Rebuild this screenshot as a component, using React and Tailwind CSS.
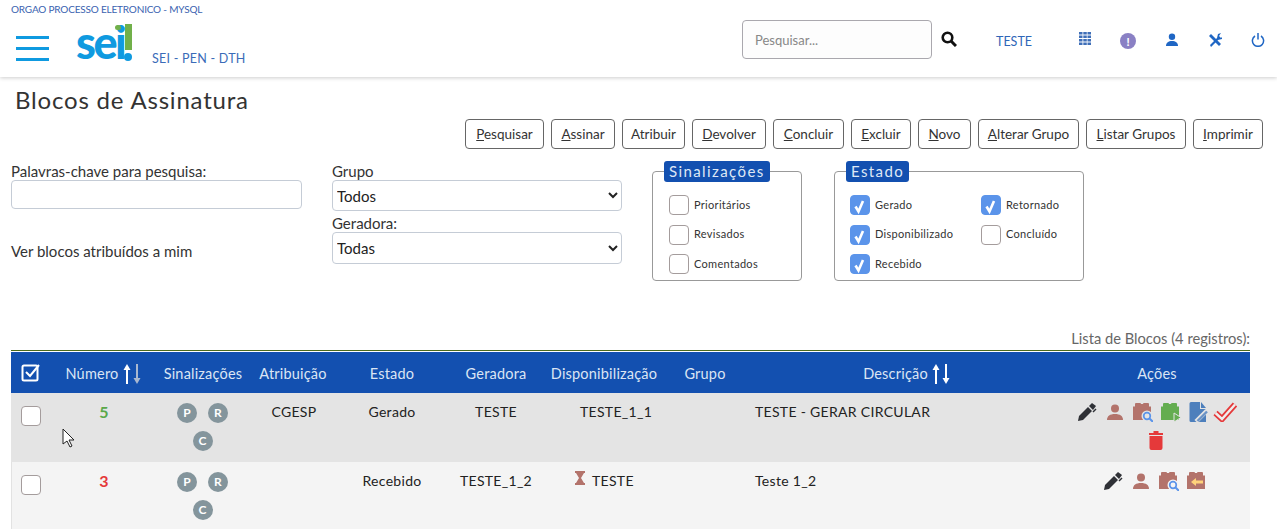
import React from 'react';

const buttons = [
  { label: 'Pesquisar', key: 'P', w: 'w-[79px]' },
  { label: 'Assinar', key: 'A', w: 'w-[64px]' },
  { label: 'Atribuir', key: '', w: 'w-[63px]' },
  { label: 'Devolver', key: 'D', w: 'w-[74px]' },
  { label: 'Concluir', key: 'C', w: 'w-[71px]' },
  { label: 'Excluir', key: 'E', w: 'w-[60px]' },
  { label: 'Novo', key: 'N', w: 'w-[53px]' },
  { label: 'Alterar Grupo', key: 'A', w: 'w-[101px]' },
  { label: 'Listar Grupos', key: 'L', w: 'w-[100px]' },
  { label: 'Imprimir', key: 'I', w: 'w-[70px]' },
];

const grid = 'grid grid-cols-[41px_103px_96px_82px_116px_92px_124px_78px_322px_184px]';

function Check({ on }) {
  return (
    <span className={`flex h-5 w-5 shrink-0 items-center justify-center rounded-[4px] border ${on ? 'border-[#5b94ea] bg-[#5b94ea]' : 'border-[#a49c9c] bg-white'}`}>
      {on && (
        <svg viewBox="0 0 20 20" className="h-5 w-5 shrink-0">
          <path d="M5.5 11.5l3 5 4.5-10.5" fill="none" stroke="#fff" strokeWidth="2.6" />
        </svg>
      )}
    </span>
  );
}

function Opt({ on, label }) {
  return (
    <label className="flex items-center gap-[5px] text-[11px] tracking-[0.3px] text-[#333]">
      <Check on={on} />
      {label}
    </label>
  );
}

function Legend({ children }) {
  return (
    <legend className="ml-[11px] rounded-[3px] bg-[#1350b0] px-[5px] text-[15px] leading-[21px] tracking-[1.4px] text-[#dfe8f6]">
      {children}
    </legend>
  );
}

function Badge({ children }) {
  return (
    <span className="flex h-5 w-5 items-center justify-center rounded-full bg-[#84959c] text-[12px] font-bold text-white">
      {children}
    </span>
  );
}

function Badges() {
  return (
    <div className="pr-[1px]">
      <div className="mx-auto flex w-[60px] flex-wrap justify-center gap-x-[11px] gap-y-2 pt-[10px]">
        <Badge>P</Badge>
        <Badge>R</Badge>
        <Badge>C</Badge>
      </div>
    </div>
  );
}

function SortArrows({ dim }) {
  const down = dim ? '#a9b8d0' : '#fff';
  return (
    <svg viewBox="0 0 20 20" className="ml-[3px] h-5 w-5">
      <path d="M5 20V4" stroke="#fff" strokeWidth="2" />
      <path d="M1.5 6L5 0l3.5 6z" fill="#fff" />
      <path d="M15 0v16" stroke={down} strokeWidth="2" />
      <path d="M11.5 14l3.5 6 3.5-6z" fill={down} />
    </svg>
  );
}

function Pen() {
  return (
    <svg viewBox="0 0 20 20" className="h-5 w-5">
      <path d="M1 19l1-5L11 5l4 4-9 9z" fill="#2f3136" />
      <path d="M12 4l3-3 4 3-3 4z" fill="#2f3136" />
      <path d="M16 10l3-3" stroke="#2f3136" strokeWidth="1.4" />
    </svg>
  );
}

function Person() {
  return (
    <svg viewBox="0 0 20 20" className="h-5 w-5">
      <circle cx="10" cy="6.5" r="4" fill="#b3736b" />
      <path d="M2 18c0-4 3-6 8-6s8 2 8 6z" fill="#b3736b" />
    </svg>
  );
}

function Blocks({ color = '#b3736b', children }) {
  return (
    <svg viewBox="0 0 20 20" className="h-5 w-5">
      <path d="M0 4.5h2V2q0-1 1-1h4q1 0 1 1h2q0-1 1-1h4q1 0 1 1v2.500h2V18H0z" fill={color} />
      {children}
    </svg>
  );
}

function BlocksSearch({ bg }) {
  return (
    <Blocks>
      <circle cx="14" cy="14" r="5.5" fill={bg} />
      <circle cx="14" cy="14" r="3.3" fill="none" stroke="#5b94ea" strokeWidth="1.7" />
      <path d="M16.500 16.500l3.500 3.500" stroke="#5b94ea" strokeWidth="2" />
    </Blocks>
  );
}

function DocPen() {
  return (
    <svg viewBox="0 0 20 20" className="h-5 w-5">
      <path d="M2 0h9v7h6v13H2q-1.500 0-1.500-1.500v-17Q.5 0 2 0z" fill="#4d7fbc" />
      <path d="M12 0l5 6h-5z" fill="#4d7fbc" />
      <path d="M7 19.500l11-11" stroke="#e4e4e4" strokeWidth="4.500" />
      <path d="M8.500 19l9.500-9.500" stroke="#6b93c6" strokeWidth="2.400" />
    </svg>
  );
}

function Icon({ children, className = 'w-5' }) {
  return <span className={`flex h-5 items-center justify-center ${className}`}>{children}</span>;
}

function Row({ tone, num, numColor, atrib, estado, geradora, disp, dispPad, desc, actions, hourglass, h }) {
  return (
    <div className={`${grid} ${h} ${tone} text-[14px] tracking-[0.3px] text-[#222]`}>
      <div className="pl-[10px] pt-[13px]">
        <Check />
      </div>
      <div className={`pl-[1px] pt-[7px] text-center text-[16px] font-bold ${numColor}`}>{num}</div>
      <Badges />
      <div className="pl-1 pt-2 text-center">{atrib}</div>
      <div className="pl-[2px] pt-2 text-center">{estado}</div>
      <div className="pl-[2px] pt-2 text-center">{geradora}</div>
      <div className={`flex items-start gap-[7px] pt-2 ${dispPad}`}>
        {hourglass && (
          <svg viewBox="0 0 10 14" className="mt-[1px] h-[14px] w-[10px]">
            <path d="M0 0h10v2H9L6 7l3 5h1v2H0v-2h1l3-5-3-5H0z" fill="#b3736b" />
          </svg>
        )}
        {disp}
      </div>
      <div />
      <div className="pl-3 pt-2">{desc}</div>
      <div className="flex flex-wrap content-start justify-center gap-x-2 gap-y-2 px-[6px] pt-[9px]">{actions}</div>
    </div>
  );
}

export default function App() {
  return (
    <div className="relative h-[529px] overflow-hidden bg-white font-['Lato',sans-serif] text-[#222]">
      <header className="relative h-[77px] bg-white shadow-[0_1px_4px_rgba(0,0,0,0.2)]">
        <div className="pl-[11px] pt-[2px] text-[10px] leading-[14px] tracking-[-0.18px] text-[#3a62b0]">ORGAO PROCESSO ELETRONICO - MYSQL</div>
        <div className="flex items-start">
          <div className="ml-[16px] mt-[20px] flex h-[25px] w-[33px] flex-col justify-between">
            <span className="h-[3px] bg-[#0f9ae0]" />
            <span className="h-[3px] bg-[#0f9ae0]" />
            <span className="h-[3px] bg-[#0f9ae0]" />
          </div>
          <div className="relative ml-[27px] mt-[8px] flex h-[37px] w-[56px] items-end">
            <span className="text-[45px] font-black leading-[37px] tracking-[-2.5px] text-[#0f9ae0]">sei</span>
            <span className="absolute left-[39px] top-[1px] h-[5px] w-[6px] rounded-full bg-[#71b04a]" />
            <span className="absolute right-0 top-0 h-[26px] w-[7px] bg-[#71b04a]" />
            <span className="absolute bottom-0 right-0 h-2 w-2 rounded-full bg-[#0f9ae0]" />
          </div>
          <div className="ml-[20px] mt-[34px] text-[12.5px] tracking-[0.25px] text-[#3a6bb8]">SEI - PEN - DTH</div>
          <div className="ml-auto mt-[4px] flex items-start">
            <input
              placeholder="Pesquisar..."
              className="h-[39px] w-[190px] rounded-[4px] border border-[#aaa8ae] bg-[#fdfdfd] pl-3 text-[13px] outline-none placeholder:text-[#888]"
            />
            <svg viewBox="0 0 16 16" className="ml-[9px] mt-[11px] h-4 w-4">
              <circle cx="6.5" cy="6.5" r="4.8" fill="none" stroke="#111" strokeWidth="2.6" />
              <path d="M10 10l5 5" stroke="#111" strokeWidth="3" />
            </svg>
            <span className="ml-[39px] mt-[13px] w-[36px] text-[12.5px] text-[#2f66b8]">TESTE</span>
            <svg viewBox="0 0 12 13" className="ml-[47px] mt-[12px] h-[13px] w-[12px]">
              <path d="M0 0h3.500v2.500H0zM4.300 0h3.500v2.500H4.300zM8.500 0H12v2.500H8.500zM0 3.500h3.500v2.500H0zM4.300 3.500h3.500v2.500H4.300zM8.500 3.500H12v2.500H8.500zM0 7h3.500v2.500H0zM4.300 7h3.500v2.500H4.300zM8.500 7H12v2.500H8.500zM0 10.500h3.500V13H0zM4.300 10.500h3.500V13H4.300zM8.500 10.500H12V13H8.500z" fill="#3f6fb8" />
            </svg>
            <span className="ml-[29px] mt-[13px] flex h-4 w-4 items-center justify-center rounded-full bg-[#8a80c4] text-[11px] font-black leading-none text-white">!</span>
            <svg viewBox="0 0 14 14" className="ml-[29px] mt-[13px] h-[14px] w-[14px]">
              <circle cx="7" cy="3.800" r="3.200" fill="#1f66c4" />
              <path d="M1 13c0-3.400 2.500-5 6-5s6 1.600 6 5z" fill="#1f66c4" />
            </svg>
            <svg viewBox="0 0 14 14" className="ml-[29px] mt-[13px] h-[14px] w-[14px]">
              <path d="M3 1l10 10-2 2L1 3z" fill="#1f66c4" />
              <path d="M2 12l7-7 1-4 3-1-2 3 2 2 2-2-1 3-4 1-7 7z" fill="#1f66c4" />
            </svg>
            <svg viewBox="0 0 14 14" className="ml-[29px] mr-[12px] mt-[13px] h-[14px] w-[14px]">
              <path d="M4 3a5.600 5.600 0 1 0 6 0" fill="none" stroke="#1f66c4" strokeWidth="1.500" />
              <path d="M7 0v6.500" stroke="#1f66c4" strokeWidth="1.500" />
            </svg>
          </div>
        </div>
      </header>

      <main>
        <h1 className="pl-[15px] pt-2 text-[24px] font-normal leading-[30px] tracking-[0.8px] text-[#333]">Blocos de Assinatura</h1>

        <div className="mt-1 flex justify-end gap-[7px] pr-[14px]">
          {buttons.map((b, i) => (
            <button key={i} className={`${b.w} h-[30px] rounded-[4px] border border-[#666] bg-white text-[13.5px] text-[#333]`}>
              {b.key ? (
                <>
                  <u>{b.label[0]}</u>
                  {b.label.slice(1)}
                </>
              ) : (
                b.label
              )}
            </button>
          ))}
        </div>

        <div className="mt-[13px] flex items-start">
          <div className="ml-[11px] w-[291px]">
            <div className="text-[15px] leading-[18px] text-[#333]">Palavras-chave para pesquisa:</div>
            <input className="h-[29px] w-full rounded-[4px] border border-[#c5ccd6] bg-white" />
            <div className="mt-[33px] text-[15px] leading-[18px] text-[#333]">Ver blocos atribuídos a mim</div>
          </div>
          <div className="ml-[30px] w-[290px]">
            <div className="text-[15px] leading-[18px] text-[#333]">Grupo</div>
            <select className="h-[31px] w-full rounded-[4px] border border-[#c5ccd6] bg-white text-[15px] text-[#222]">
              <option>Todos</option>
            </select>
            <div className="mt-[3px] text-[15px] leading-[18px] text-[#333]">Geradora:</div>
            <select className="h-[32px] w-full rounded-[4px] border border-[#c5ccd6] bg-white text-[15px] text-[#222]">
              <option>Todas</option>
            </select>
          </div>
          <fieldset className="-mt-[1px] ml-[30px] h-[120px] w-[150px] rounded-[4px] border border-[#999]">
            <Legend>Sinalizações</Legend>
            <div className="flex flex-col gap-[9.5px] pl-4 pt-[13px]">
              <Opt label="Prioritários" />
              <Opt label="Revisados" />
              <Opt label="Comentados" />
            </div>
          </fieldset>
          <fieldset className="-mt-[1px] ml-[32px] h-[120px] w-[250px] rounded-[4px] border border-[#999]">
            <Legend>Estado</Legend>
            <div className="grid grid-cols-[131px_1fr] gap-y-[9.5px] pl-[15px] pt-[13px]">
              <Opt on label="Gerado" />
              <Opt on label="Retornado" />
              <Opt on label="Disponibilizado" />
              <Opt label="Concluído" />
              <Opt on label="Recebido" />
            </div>
          </fieldset>
        </div>

        <div className="mt-[47px] pr-[27px] text-right text-[14.7px] leading-[20px] text-[#666]">Lista de Blocos (4 registros):</div>

        <div className="ml-[11px] mr-[27px] mt-[2px] border-t border-[#4d6a1a]">
          <div className={`${grid} mt-[1px] h-[41px] items-center bg-[#1350b0] pt-[3px] text-[14.5px] tracking-[0.2px] text-[#dbe5f4]`}>
            <div className="pl-[10px]">
              <svg viewBox="0 0 20 20" className="-mt-[3px] h-5 w-5">
                <rect x="1.500" y="2.500" width="15" height="15" rx="1.500" fill="none" stroke="#fff" strokeWidth="2" />
                <path d="M5 9l4 4 9-11" fill="none" stroke="#fff" strokeWidth="2" />
              </svg>
            </div>
            <div className="flex items-center justify-center">Número<SortArrows dim /></div>
            <div className="text-center">Sinalizações</div>
            <div className="pl-[2px] text-center">Atribuição</div>
            <div className="pl-[2px] text-center">Estado</div>
            <div className="pl-[2px] text-center">Geradora</div>
            <div className="pl-[2px] text-center">Disponibilização</div>
            <div className="pl-[2px] text-center">Grupo</div>
            <div className="flex items-center justify-center pl-[6px]">Descrição<SortArrows /></div>
            <div className="text-center">Ações</div>
          </div>

          <Row
            h="h-[69px]"
            tone="bg-[#e4e4e4]"
            num="5"
            numColor="text-[#5aa84a]"
            atrib="CGESP"
            estado="Gerado"
            geradora="TESTE"
            disp="TESTE_1_1"
            dispPad="pl-[39px]"
            desc="TESTE - GERAR CIRCULAR"
            actions={
              <>
                <Icon><Pen /></Icon>
                <Icon><Person /></Icon>
                <Icon><BlocksSearch bg="#e4e4e4" /></Icon>
                <Icon>
                  <Blocks color="#64ad50">
                    <path d="M13 11l7 4.500-7 4.500z" fill="#64ad50" stroke="#e4e4e4" />
                  </Blocks>
                </Icon>
                <Icon><DocPen /></Icon>
                <Icon className="-ml-[4px] w-6">
                  <svg viewBox="0 0 24 20" className="h-5 w-6">
                    <path d="M2.500 11l6.500 6L22 2.500" fill="none" stroke="#e5393a" strokeWidth="6" />
                    <path d="M2.500 11l6.500 6L22 2.500" fill="none" stroke="#eeeeee" strokeWidth="2.400" />
                  </svg>
                </Icon>
                <Icon className="mr-[3px] w-5">
                  <svg viewBox="0 0 20 20" className="h-5 w-5">
                    <path d="M3 3h14v2H3zM7.500 1h5v2h-5zM3.500 6h13v12q0 2-2 2h-9q-2 0-2-2z" fill="#e5393a" />
                  </svg>
                </Icon>
              </>
            }
          />
          <Row
            h="h-[67px]"
            tone="bg-[#f4f4f4] shadow-[inset_1px_0_0_#e2e2e2]"
            num="3"
            numColor="text-[#e5393a]"
            estado="Recebido"
            geradora="TESTE_1_2"
            disp="TESTE"
            dispPad="pl-[34px]"
            hourglass
            desc="Teste 1_2"
            actions={
              <>
                <Icon><Pen /></Icon>
                <Icon><Person /></Icon>
                <Icon><BlocksSearch bg="#f4f4f4" /></Icon>
                <Icon className="mr-[4px] w-5">
                  <Blocks>
                    <path d="M4 11l5-4v2.500h7v3H9V15z" fill="#ffd27a" />
                  </Blocks>
                </Icon>
              </>
            }
          />
        </div>
      </main>

      <svg viewBox="0 0 14 20" className="absolute left-[62px] top-[428px] h-5 w-[14px]">
        <path d="M1 1v15l4-3 3 6 2-1-3-6h5z" fill="#fff" stroke="#222" strokeWidth="1" />
      </svg>
    </div>
  );
}
